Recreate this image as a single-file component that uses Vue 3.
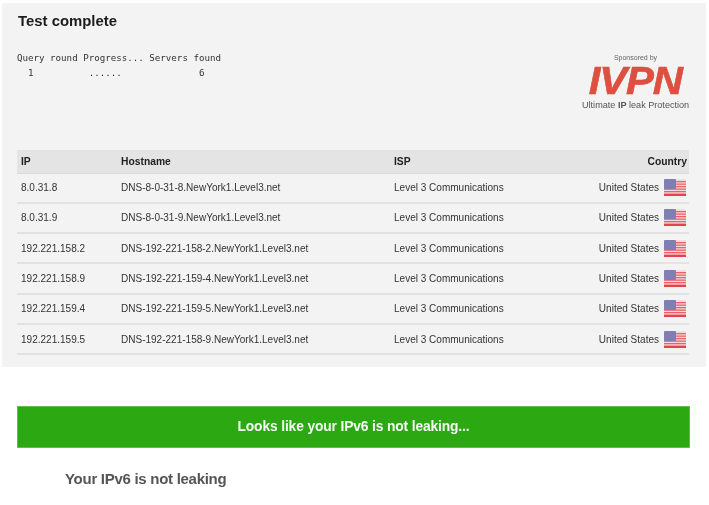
<script setup>
const rows = [
  ['8.0.31.8', 'DNS-8-0-31-8.NewYork1.Level3.net'],
  ['8.0.31.9', 'DNS-8-0-31-9.NewYork1.Level3.net'],
  ['192.221.158.2', 'DNS-192-221-158-2.NewYork1.Level3.net'],
  ['192.221.158.9', 'DNS-192-221-159-4.NewYork1.Level3.net'],
  ['192.221.159.4', 'DNS-192-221-159-5.NewYork1.Level3.net'],
  ['192.221.159.5', 'DNS-192-221-158-9.NewYork1.Level3.net'],
]
const stripes = [0, 2.5, 5, 7.5, 10, 12.5]
</script>

<template>
  <div class="page">
    <section class="panel">
      <h2 class="title">Test complete</h2>
      <div class="top">
        <pre class="log">Query round Progress... Servers found
  1          ......              6</pre>
        <div class="sponsor">
          <div class="by">Sponsored by</div>
          <div class="logo"><span>IVPN</span></div>
          <div class="tag">Ultimate <b>IP</b> leak Protection</div>
        </div>
      </div>
      <div class="table">
        <div class="row head">
          <span class="ip">IP</span>
          <span class="host">Hostname</span>
          <span class="isp">ISP</span>
          <span class="country">Country</span>
        </div>
        <div v-for="r in rows" :key="r[0]" class="row">
          <span class="ip">{{ r[0] }}</span>
          <span class="host">{{ r[1] }}</span>
          <span class="isp">Level 3 Communications</span>
          <span class="country">
            United States
            <svg class="flag" width="22" height="17" viewBox="0 0 22 17">
              <rect width="22" height="17" rx="1" fill="#f6dcdf" />
              <rect v-for="s in stripes" :key="s" x="0" :y="s + 2" width="22" height="1.3" fill="#ec5f6a" />
              <rect y="15" width="22" height="2" fill="#e2434f" />
              <rect width="12" height="10" rx="1" fill="#7f7fb5" />
            </svg>
          </span>
        </div>
      </div>
    </section>
    <div class="banner">Looks like your IPv6 is not leaking...</div>
    <h3 class="result">Your IPv6 is not leaking</h3>
  </div>
</template>

<style scoped>
.page {
  width: 709px;
  height: 505px;
  overflow: hidden;
  background: #fff;
  font-family: "Liberation Sans", Arial, sans-serif;
  padding-top: 3px;
  box-sizing: border-box;
  filter: blur(0.35px);
}
.panel {
  margin: 0 3px 0 2px;
  height: 364px;
  background: #f3f3f3;
  padding: 10px 17px 0 15px;
  box-sizing: border-box;
}
.title {
  margin: 0 0 0 1px;
  font-size: 14.9px;
  line-height: 17px;
  font-weight: 700;
  color: #1c1c1c;
}
.top {
  display: flex;
  justify-content: space-between;
  height: 120px;
}
.log {
  margin: 20px 0 0;
  font-family: "DejaVu Sans Mono", monospace;
  font-size: 9.17px;
  line-height: 15px;
  color: #333;
}
.sponsor {
  width: 107px;
  margin-top: 23px;
  text-align: center;
  color: #555;
}
.by {
  font-size: 7px;
  line-height: 9px;
  color: #666;
}
.logo {
  height: 34px;
  line-height: 34px;
  margin-top: 2px;
  color: #dd4f40;
  font-size: 38px;
  font-weight: 700;
  font-style: italic;
  white-space: nowrap;
}
.logo span {
  display: inline-block;
  transform: scaleX(1.1);
  letter-spacing: -1px;
  -webkit-text-stroke: 0.6px #dd4f40;
}
.tag {
  font-size: 9.1px;
  line-height: 11px;
  white-space: nowrap;
  margin-top: 2px;
}
.table {
  font-size: 10.03px;
  color: #333;
}
.row {
  display: flex;
  align-items: center;
  height: 30.3px;
  box-sizing: border-box;
  border-bottom: 2px solid #e2e2e2;
  padding: 0 3px 0 4px;
}
.row.head {
  height: 23.5px;
  background: #e4e4e4;
  font-size: 10.3px;
  font-weight: 700;
  color: #222;
  border-bottom: 1px solid #dadada;
  padding-right: 2px;
}
.ip { width: 100px; }
.host { width: 273px; }
.isp { width: 170px; }
.country {
  flex: 1;
  display: flex;
  justify-content: flex-end;
  align-items: center;
  gap: 5px;
}
.flag { flex: none; }
.banner {
  margin: 39px 19px 0 17px;
  height: 42px;
  background: #2ca813;
  border: 1px solid #5fc04c;
  box-sizing: border-box;
  color: #f4fbf2;
  font-size: 13.8px;
  letter-spacing: -0.13px;
  font-weight: 700;
  line-height: 39px;
  text-align: center;
}
.result {
  margin: 21px 0 0 65px;
  font-size: 15px;
  letter-spacing: -0.28px;
  line-height: 20px;
  font-weight: 700;
  color: #555;
}
</style>
